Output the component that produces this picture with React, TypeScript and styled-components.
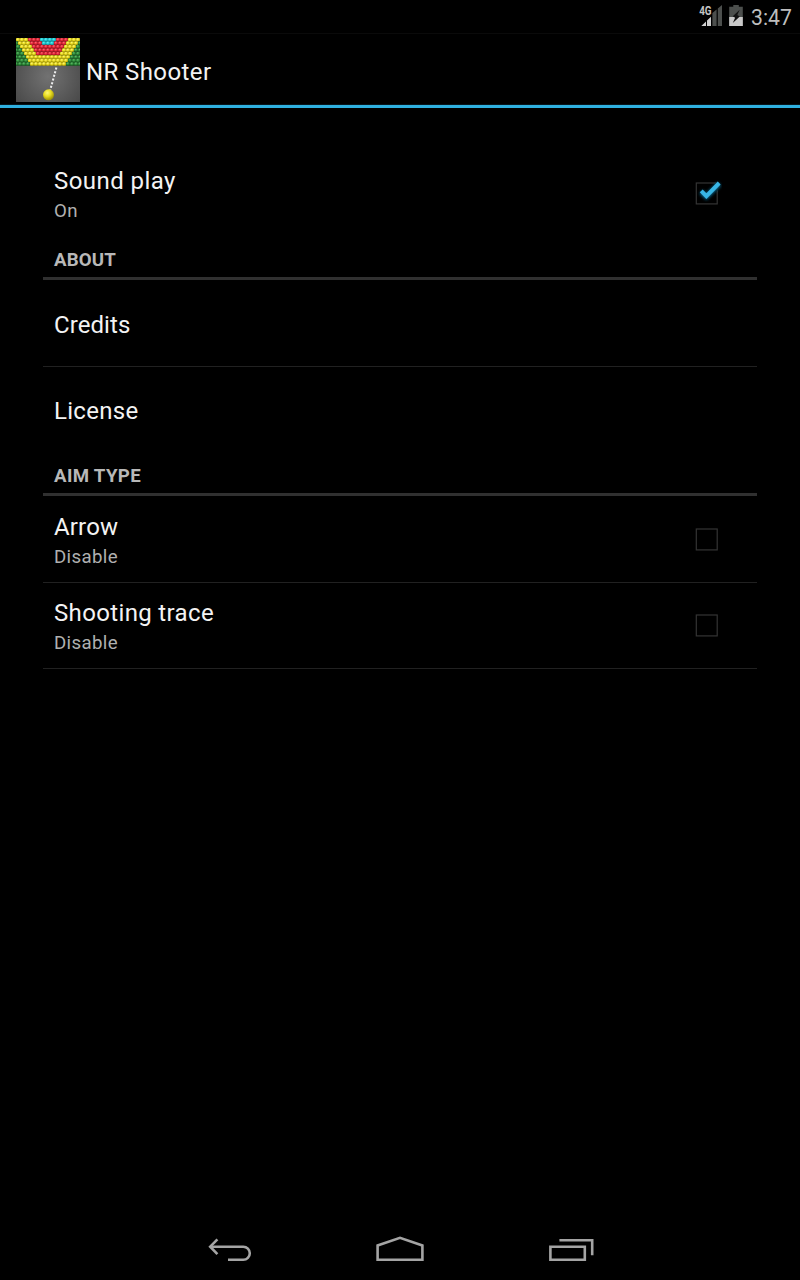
import React from 'react';
import styled, { createGlobalStyle } from 'styled-components';

const Global = createGlobalStyle`
  body { margin: 0; background: #000; }
  * { box-sizing: border-box; }
`;

const Screen = styled.div`
  width: 800px;
  height: 1280px;
  display: flex;
  flex-direction: column;
  background: #000;
  color: #f3f3f3;
  font-family: Roboto, sans-serif;
  overflow: hidden;
`;

const StatusBar = styled.header`
  height: 34px;
  flex: none;
  display: flex;
  justify-content: flex-end;
  align-items: flex-start;
  padding-right: 8px;
  border-bottom: 1px solid #0a0a0a;
`;

const StatusIcons = styled.svg`
  display: block;
  margin-right: 7px;
`;

const Clock = styled.span`
  width: 41px;
  font-size: 21.2px;
  line-height: 35px;
  color: #bebebe;
  white-space: nowrap;
`;

const ActionBar = styled.div`
  height: 74px;
  flex: none;
  display: flex;
  align-items: flex-start;
  padding: 4px 16px 0;
  gap: 6px;
  border-bottom: 3px solid #2fb0e0;
  box-shadow: inset 0 -1px #06161c;
`;

const AppTitle = styled.h1`
  margin: 0;
  font-size: 24px;
  font-weight: 400;
  line-height: 69px;
  letter-spacing: 0.4px;
`;

const Preferences = styled.main`
  flex: 1;
  padding: 43px 43px 0;
`;

const Row = styled.div<{ $divided?: boolean }>`
  height: 86px;
  display: flex;
  align-items: center;
  justify-content: space-between;
  padding: 0 35px 0 11px;
  box-shadow: ${p => (p.$divided ? 'inset 0 -1px #212121' : 'none')};
`;

const RowText = styled.div`
  display: flex;
  flex-direction: column;
  padding-top: 2px;
`;

const RowTitle = styled.span<{ $tracking: number }>`
  font-size: 24px;
  line-height: 32px;
  letter-spacing: ${p => p.$tracking}px;
`;

const Summary = styled.span`
  font-size: 18.67px;
  line-height: 28px;
  letter-spacing: 0.35px;
  color: #b0b0b0;
`;

const Category = styled.h2<{ $tracking: number }>`
  height: 43px;
  margin: 0 0 1px;
  padding: 0 11px;
  border-bottom: 3px solid #303030;
  font-size: 18.67px;
  font-weight: 700;
  line-height: 46px;
  letter-spacing: ${p => p.$tracking}px;
  color: #b8b8b8;
`;

const NavBar = styled.nav`
  height: 64px;
  flex: none;
  display: flex;
  justify-content: center;
  align-items: center;
`;

const NavButton = styled.div`
  width: 171px;
  display: flex;
  justify-content: center;
`;

const BallColors = {
  c: ['#5ff0f4', '#1cc6d0', '#0e8790'],
  r: ['#ff6a74', '#df2234', '#8e1420'],
  y: ['#fff878', '#e6d71b', '#948a0c'],
  g: ['#5fb968', '#2a8737', '#174f1f'],
};

type BallKind = keyof typeof BallColors;

const ballKind = (row: number, x: number): BallKind => {
  const d = Math.abs(x - 32);
  if (row < 2 && d < 8 - row * 2) return 'c';
  if (row < 5 && d < 20 - row * 2) return 'r';
  if (d < 32 - row * 2) return 'y';
  return 'g';
};

const AppIcon = () => (
  <svg width="64" height="64" viewBox="0 0 64 64">
    <defs>
      <radialGradient id="ground" cx="50%" cy="60%" r="65%">
        <stop offset="0" stopColor="#727272" />
        <stop offset="1" stopColor="#484848" />
      </radialGradient>
      <radialGradient id="ball" cx="40%" cy="32%" r="65%">
        <stop offset="0" stopColor="#fdf776" />
        <stop offset=".5" stopColor="#e8dc20" />
        <stop offset="1" stopColor="#a19509" />
      </radialGradient>
      {(Object.keys(BallColors) as BallKind[]).map(kind => (
        <radialGradient key={kind} id={`ball-${kind}`} cx="42%" cy="32%" r="75%">
          <stop offset="0" stopColor={BallColors[kind][0]} />
          <stop offset=".5" stopColor={BallColors[kind][1]} />
          <stop offset="1" stopColor={BallColors[kind][2]} />
        </radialGradient>
      ))}
    </defs>
    <rect width="64" height="64" fill="url(#ground)" />
    {Array.from({ length: 8 }, (_, row) =>
      Array.from({ length: 17 }, (_, i) => {
        const x = i * 4 + (row % 2 ? 0 : 2);
        const y = row * 3.45 + 1.8;
        const kind = ballKind(row, x);
        return (
          <g key={`${row}-${i}`}>
            <rect x={x - 2} y={y - 1.8} width="4" height="3.5" fill={BallColors[kind][2]} />
            <ellipse cx={x} cy={y} rx="2.1" ry="1.9" fill={`url(#ball-${kind})`} />
          </g>
        );
      }),
    )}
    <path d="M40.4 29.5 34 53" stroke="#ededed" strokeWidth="2" strokeDasharray="2.1 1.7" />
    <circle cx="32.5" cy="56.8" r="5.5" fill="url(#ball)" />
  </svg>
);

const CheckBox = ({ checked = false }: { checked?: boolean }) => (
  <svg width="32" height="32" viewBox="0 0 32 32">
    <defs>
      <filter id="glow" x="-40%" y="-40%" width="180%" height="180%">
        <feGaussianBlur stdDeviation="1.5" />
      </filter>
    </defs>
    <rect x="6.3" y="5" width="20.9" height="20.9" fill="none" stroke="#343434" strokeWidth="1.2" />
    {checked && (
      <>
        <path d="m11.4 14 5.2 4.8L29.5 6" fill="none" stroke="#000" strokeWidth="6.5" opacity=".75" />
        <path d="m11.2 13.8 5.2 4.8L29.3 6" fill="none" stroke="#0b6c94" strokeWidth="5" filter="url(#glow)" />
        <path d="m11.2 12.8 5.2 5.4L29.2 5" fill="none" stroke="#38b6e6" strokeWidth="4" />
      </>
    )}
  </svg>
);

const SignalAndBattery = () => (
  <StatusIcons width="46" height="30" viewBox="0 0 46 30">
    <g fill="#4c4f4d">
      <path d="M14.4 13 18.6 9.5V26h-4.2zM19.8 8.6 24 5v21h-4.2z" />
      <path d="M35.3 5h5.5v1.8h4V26H31.2V6.8h4.1z" />
    </g>
    <path d="M3.3 26 8 21.5V26zM9 20.5l4-3.8V26H9z" fill="#d0d0d0" />
    <path d="M31.2 17h13.6v9H31.2z" fill="#cacaca" />
    <path d="m41.7 9.7-6.9 6.6 2.3 1.5-2.3 5.2 7-6.6-2.5-1.4z" fill="#131313" />
    <text x="1.2" y="15.4" fontSize="12.6" fontWeight="700" textLength="12.4" lengthAdjust="spacingAndGlyphs" fill="#c5c5c5">4G</text>
  </StatusIcons>
);

const BackIcon = () => (
  <svg width="50" height="36" viewBox="0 0 50 36" fill="none" stroke="#a4a4a4" strokeWidth="2.6">
    <path d="M6.3 16.7h33a6.5 6.5 0 0 1 0 13H24" />
    <path d="M13.4 9.3 6.2 16.7l7.2 7.4" />
  </svg>
);

const HomeIcon = () => (
  <svg width="50" height="36" viewBox="0 0 50 36" fill="none" stroke="#a4a4a4" strokeWidth="2.6">
    <path d="M2.6 29.7V15.4L25 7.8l22.4 7.6v14.3z" />
  </svg>
);

const RecentIcon = () => (
  <svg width="50" height="36" viewBox="0 0 50 36" fill="none" stroke="#a4a4a4" strokeWidth="2.6">
    <path d="M4.4 16.7h34.4v13H4.4zM13.4 10.2h32.8v15" />
  </svg>
);

interface PreferenceProps {
  title: string;
  summary?: string;
  checked?: boolean;
  divided?: boolean;
  tracking?: number;
}

const Preference = ({ title, summary, checked, divided, tracking = 0.43 }: PreferenceProps) => (
  <Row $divided={divided}>
    <RowText>
      <RowTitle $tracking={tracking}>{title}</RowTitle>
      {summary && <Summary>{summary}</Summary>}
    </RowText>
    {checked !== undefined && <CheckBox checked={checked} />}
  </Row>
);

export default function App() {
  return (
    <Screen>
      <Global />
      <StatusBar>
        <SignalAndBattery />
        <Clock>3:47</Clock>
      </StatusBar>
      <ActionBar>
        <AppIcon />
        <AppTitle>NR Shooter</AppTitle>
      </ActionBar>
      <Preferences>
        <Preference title="Sound play" summary="On" checked />
        <Category $tracking={0.15}>ABOUT</Category>
        <Preference title="Credits" tracking={0.08} divided />
        <Preference title="License" tracking={0.3} />
        <Category $tracking={0.35}>AIM TYPE</Category>
        <Preference title="Arrow" summary="Disable" tracking={0.15} checked={false} divided />
        <Preference title="Shooting trace" summary="Disable" tracking={0.35} checked={false} divided />
      </Preferences>
      <NavBar>
        <NavButton><BackIcon /></NavButton>
        <NavButton><HomeIcon /></NavButton>
        <NavButton><RecentIcon /></NavButton>
      </NavBar>
    </Screen>
  );
}
